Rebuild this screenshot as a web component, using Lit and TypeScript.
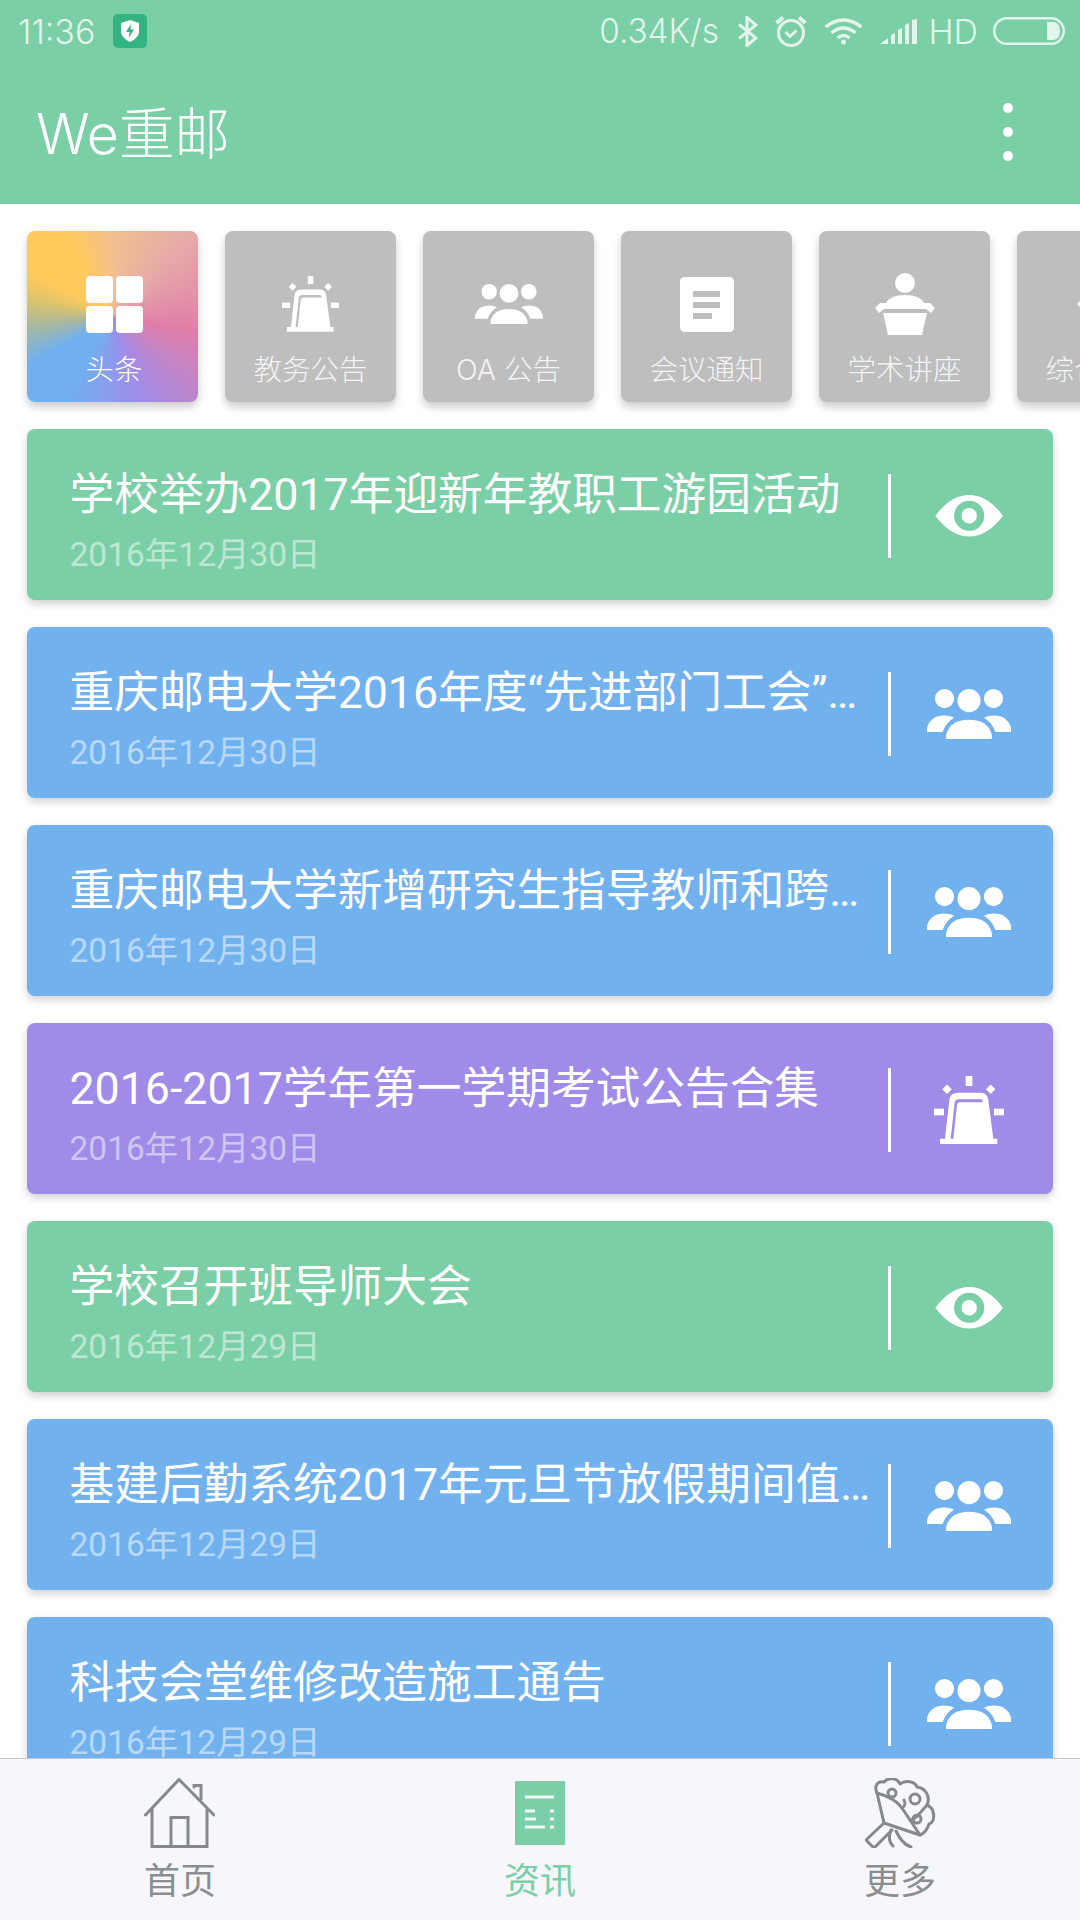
import { LitElement, css, html } from 'lit';
import { customElement } from 'lit/decorators.js';

const GREEN = '#7bcfa6';
const BLUE = '#71b2ee';
const PURPLE = '#a08ce8';

const gridIcon = html`
  <svg width="57" height="57" viewBox="0 0 57 57" fill="#fff">
    <rect width="27" height="27" rx="4" />
    <rect x="30" width="27" height="27" rx="4" />
    <rect y="30" width="27" height="27" rx="4" />
    <rect x="30" y="30" width="27" height="27" rx="4" />
  </svg>
`;

const alarmIcon = (width: number) => html`
  <svg width=${width} viewBox="0 0 210 205" fill="#fff">
    <rect x="95" width="20" height="30" />
    <rect y="98" width="30" height="20" />
    <rect x="180" y="98" width="30" height="20" />
    <rect x="29" y="30" width="20" height="20" transform="rotate(45 39 40)" />
    <rect x="160" y="30" width="20" height="20" transform="rotate(45 170 40)" />
    <path
      fill-rule="evenodd"
      d="M18 205V188H33L46 72Q49 50 72 50H140Q160 50 163 72L178 188H190V205Z
         M50 188H58L69 86Q70 79 77 79H143Q148 79 146 73Q144 70 138 70H74Q64 70 62 80Z"
    />
  </svg>
`;

const peopleIcon = (width: number) => html`
  <svg width=${width} viewBox="0 0 254 153" fill="#fff">
    <circle cx="53" cy="29" r="29" />
    <circle cx="127" cy="35" r="35" />
    <circle cx="201" cy="29" r="29" />
    <path d="M58 153V138Q70 93 127 93T196 138V153Z" />
    <path d="M0 130V118Q10 80 52 80Q70 80 82 87Q58 100 47 130Z" />
    <path d="M254 130V118Q244 80 202 80Q184 80 172 87Q196 100 207 130Z" />
  </svg>
`;

const eyeIcon = html`
  <svg width="69" height="41.5" viewBox="-105 -62 206 124" fill="#fff">
    <path
      fill-rule="evenodd"
      d="M-101 0Q-55 -62 0 -62T101 0Q55 62 0 62T-101 0Z
         M45 0A45 45 0 1 0 -45 0A45 45 0 1 0 45 0Z
         M23 0A23 23 0 1 1 -23 0A23 23 0 1 1 23 0Z"
    />
  </svg>
`;

const docIcon = html`
  <svg width="54" height="55" viewBox="0 0 54 55" fill="#fff">
    <path
      fill-rule="evenodd"
      d="M5 0H49Q54 0 54 5V50Q54 55 49 55H5Q0 55 0 50V5Q0 0 5 0Z
         M13 14V20H40V14Z M13 25V31H40V25Z M13 36V42H32V36Z"
    />
  </svg>
`;

const podiumIcon = html`
  <svg width="60" height="62" viewBox="0 0 60 62" fill="#fff">
    <circle cx="30" cy="10" r="10" />
    <path d="M11 30Q15 22 30 22T49 30Z" />
    <path d="M5 30H55L60 35L56 40L51 36H9L4 40L0 35Z" />
    <path d="M8 40H52L47 62H13Z" />
  </svg>
`;

const diamondIcon = html`
  <svg width="52" height="52" viewBox="0 0 52 52" fill="#fff">
    <path d="M0 26L6 20H46L52 26L46 32H6Z" />
  </svg>
`;

const tiles = [
  { label: '头条', icon: gridIcon, first: true },
  { label: '教务公告', icon: alarmIcon(57) },
  { label: 'OA 公告', icon: peopleIcon(68) },
  { label: '会议通知', icon: docIcon },
  { label: '学术讲座', icon: podiumIcon },
  { label: '综合公告', icon: diamondIcon },
];

const news = [
  { title: '学校举办2017年迎新年教职工游园活动', date: '2016年12月30日', color: GREEN, icon: eyeIcon },
  { title: '重庆邮电大学2016年度“先进部门工会”评选结果公示', date: '2016年12月30日', color: BLUE, icon: peopleIcon(84) },
  { title: '重庆邮电大学新增研究生指导教师和跨学科指导教师', date: '2016年12月30日', color: BLUE, icon: peopleIcon(84) },
  { title: '2016-2017学年第一学期考试公告合集', date: '2016年12月30日', color: PURPLE, icon: alarmIcon(70) },
  { title: '学校召开班导师大会', date: '2016年12月29日', color: GREEN, icon: eyeIcon },
  { title: '基建后勤系统2017年元旦节放假期间值班安排表', date: '2016年12月29日', color: BLUE, icon: peopleIcon(84) },
  { title: '科技会堂维修改造施工通告', date: '2016年12月29日', color: BLUE, icon: peopleIcon(84) },
];

@customElement('app-root')
export class AppRoot extends LitElement {
  static styles = css`
    :host {
      display: flex;
      flex-direction: column;
      width: 1080px;
      height: 1920px;
      overflow: hidden;
      background: #fff;
      font-family: Roboto, 'Noto Sans CJK SC', sans-serif;
    }
    .head {
      flex: none;
      height: 204px;
      background: #7bcfa6;
      display: flex;
      flex-direction: column;
    }
    .status {
      height: 62px;
      display: flex;
      align-items: center;
      padding: 0 15px 0 18px;
      color: #e3f4ec;
      font: 300 34px Inter, 'Noto Sans CJK SC', sans-serif;
    }
    .status svg {
      display: block;
      flex: none;
    }
    .badge {
      width: 34px;
      height: 34px;
      margin-left: 18px;
      border-radius: 5px;
      background: #33b282;
      display: flex;
      align-items: center;
      justify-content: center;
    }
    .status-right {
      margin-left: auto;
      display: flex;
      align-items: center;
    }
    .speed {
      font-size: 33.3px;
    }
    .bt {
      margin-left: 19px;
    }
    .alarm {
      margin-left: 17px;
    }
    .wifi {
      margin-left: 17px;
    }
    .signal {
      margin-left: 17px;
    }
    .hd {
      margin-left: 11.5px;
    }
    .battery {
      margin-left: 15px;
    }
    .toolbar {
      flex: 1;
      display: flex;
      align-items: center;
      justify-content: space-between;
      padding: 0 0 2px 36px;
      color: #fff;
      font: 300 55.5px Inter, 'Noto Sans CJK SC', sans-serif;
    }
    .brand {
      margin-top: -4px;
    }
    .dots {
      display: flex;
      flex-direction: column;
      gap: 14px;
      margin-right: 67px;
    }
    .dots i {
      width: 10px;
      height: 10px;
      border-radius: 50%;
      background: #fff;
    }
    .tiles {
      flex: none;
      display: flex;
      gap: 27px;
      padding: 27px 0 0 27px;
      height: 198px;
      box-sizing: content-box;
      overflow: hidden;
    }
    .tile {
      flex: none;
      width: 171px;
      height: 171px;
      box-sizing: border-box;
      border-radius: 8px;
      background: #bebebe;
      box-shadow: 0 5px 9px rgba(0, 0, 0, 0.2);
      color: rgba(255, 255, 255, 0.85);
      display: flex;
      flex-direction: column;
      align-items: center;
      font: 300 28.5px Inter, 'Noto Sans CJK SC', sans-serif;
    }
    .tile.first {
      color: #fff;
      padding-left: 3px;
      background: conic-gradient(
        #f3c08f 0deg,
        #e6a9a9 45deg,
        #e07ea8 100deg,
        #a08ce8 160deg,
        #70b0f0 212deg,
        #70b0f0 240deg,
        #a8b8a0 263deg,
        #dcc46c 282deg,
        #ffc95c 298deg,
        #ffc95c 330deg,
        #f3c08f 360deg
      );
    }
    .tile-icon {
      height: 64px;
      margin-top: 41px;
      display: flex;
      align-items: center;
      justify-content: center;
    }
    .tile-icon svg {
      display: block;
    }
    .tile-label {
      margin-top: 14px;
      line-height: 40px;
      white-space: nowrap;
    }
    .list {
      flex: 1;
      min-height: 0;
      overflow: hidden;
      display: flex;
      flex-direction: column;
      gap: 27px;
      padding: 0 27px;
    }
    .card {
      flex: none;
      height: 171px;
      border-radius: 8px;
      box-shadow: 0 4px 9px rgba(0, 0, 0, 0.18);
      display: flex;
      color: #fff;
    }
    .text {
      flex: 1;
      min-width: 0;
      padding: 36px 10px 0 42.5px;
    }
    .title {
      font-size: 44.7px;
      line-height: 60px;
      white-space: nowrap;
      overflow: hidden;
      text-overflow: ellipsis;
    }
    .date {
      margin-top: 10px;
      font-size: 33.5px;
      line-height: 40px;
      color: rgba(255, 255, 255, 0.5);
    }
    .side {
      flex: none;
      width: 165px;
      height: 84px;
      margin-top: 45px;
      border-left: 3px solid #fff;
      box-sizing: border-box;
      display: flex;
      align-items: center;
      justify-content: center;
      padding-right: 7px;
    }
    .side svg {
      display: block;
    }
    .nav {
      flex: none;
      height: 162px;
      border-top: 1px solid #c8c8cc;
      box-sizing: border-box;
      background: #f6f6fb;
      display: grid;
      grid-template-columns: 360px 360px 360px;
    }
    .nav-item {
      display: flex;
      flex-direction: column;
      align-items: center;
      color: #8a8e91;
      font-size: 36px;
    }
    .nav-item.active {
      color: #7bcfa6;
    }
    .nav-icon {
      height: 70px;
      margin-top: 19px;
      display: flex;
      align-items: center;
    }
    .nav-icon svg {
      display: block;
    }
    .nav-label {
      margin-top: 10px;
      line-height: 48px;
    }
    .home {
      margin-left: -2px;
    }
  `;

  renderStatus() {
    return html`
      <div class="status">
        <span>11:36</span>
        <span class="badge">
          <svg width="18" height="22" viewBox="0 0 18 22">
            <path fill="#fff" d="M9 0L18 3V13Q16 19 9 22Q2 19 0 13V3Z" />
            <path fill="#33b282" d="M10 4L5 12H8.5L7.5 18L13 9.5H9.5Z" />
          </svg>
        </span>
        <span class="status-right">
          <span class="speed">0.34K/s</span>
          <svg class="bt" width="20" height="31" viewBox="0 0 20 31" fill="none" stroke="#e3f4ec" stroke-width="3">
            <path d="M1 8.5L18 22L9 29.5V1.5L18 9L1 22.5" />
          </svg>
          <svg class="alarm" width="32" height="32" viewBox="0 0 32 32" fill="none" stroke="#e3f4ec" stroke-width="3">
            <circle cx="16" cy="18" r="12.5" />
            <path d="M10.5 17L15 21.5L21.5 15.5" />
            <path stroke-width="4" d="M1.5 8L8 2.5M30.5 8L24 2.5" />
          </svg>
          <svg class="wifi" width="39" height="28" viewBox="0 0 39 28" fill="none" stroke="#e3f4ec" stroke-width="3.5">
            <path d="M1.5 10Q19.5 -4 37.5 10" />
            <path d="M7.5 16Q19.5 6 31.5 16" />
            <path d="M13.5 21Q19.5 16 25.5 21" />
            <circle cx="19.5" cy="25" r="2.5" fill="#e3f4ec" stroke="none" />
          </svg>
          <svg class="signal" width="37" height="25" viewBox="0 0 37 25" fill="#e3f4ec">
            <path d="M0 25L8 19V25ZM11 16L15 14V25H11ZM18 11L22 9V25H18ZM25 6L29 4V25H25ZM32 1L37 0V25H32Z" />
          </svg>
          <span class="hd">HD</span>
          <svg class="battery" width="72" height="28" viewBox="0 0 72 28" fill="none">
            <rect x="1.2" y="1.2" width="69.6" height="25.6" rx="12.8" stroke="#e3f4ec" stroke-width="2.4" />
            <path fill="#e3f4ec" d="M54 5H60Q67 5 67 14T60 23H54Z" />
          </svg>
        </span>
      </div>
    `;
  }

  render() {
    return html`
      <div class="head">
        ${this.renderStatus()}
        <div class="toolbar">
          <span class="brand">We重邮</span>
          <div class="dots"><i></i><i></i><i></i></div>
        </div>
      </div>
      <div class="tiles">
        ${tiles.map(
          (t) => html`
            <div class="tile ${t.first ? 'first' : ''}">
              <div class="tile-icon">${t.icon}</div>
              <div class="tile-label">${t.label}</div>
            </div>
          `
        )}
      </div>
      <div class="list">
        ${news.map(
          (n) => html`
            <div class="card" style="background:${n.color}">
              <div class="text">
                <div class="title">${n.title}</div>
                <div class="date">${n.date}</div>
              </div>
              <div class="side">${n.icon}</div>
            </div>
          `
        )}
      </div>
      <div class="nav">
        <div class="nav-item">
          <div class="nav-icon home">
            <svg width="71" height="70" viewBox="0 0 71 70" fill="none" stroke="#85898c" stroke-width="3" stroke-linecap="round">
              <path d="M1.5 37L35 1.5L70 37" />
              <path d="M8 31V68.5H63V31" />
              <path d="M27 68V39.5H44V68" />
              <path d="M50 9V7.5H57V21" />
            </svg>
          </div>
          <div class="nav-label">首页</div>
        </div>
        <div class="nav-item active">
          <div class="nav-icon">
            <svg width="50" height="64" viewBox="0 0 50 64">
              <rect width="50" height="64" fill="#7bcfa6" />
              <path
                fill="#f2f8f5"
                d="M10 14.5H39V17.5H10ZM10 28.5H20V31.5H10ZM35 28.5H39V31.5H35ZM10 36.5H21V39.5H10ZM35 36.5H39V39.5H35ZM10 44.5H30V47.5H10ZM35 44.5H39V47.5H35Z"
              />
            </svg>
          </div>
          <div class="nav-label">资讯</div>
        </div>
        <div class="nav-item">
          <div class="nav-icon">
            <svg width="71" height="70" viewBox="0 0 71 70" fill="none" stroke="#85898c" stroke-width="3" stroke-linejoin="round" stroke-linecap="round">
              <path d="M12 15L19 45L55 57L37 30Q30 20 12 15Z" />
              <path d="M19 45L1 62L9 70L27 52" />
              <path d="M26 52Q22 62 28 68M31 53Q37 66 46 69" />
              <path d="M12 15C9 8 12 3 19 4C22 0 32 -1 35 6C40 2 50 3 52 9C60 10 66 18 62 27C70 30 71 44 64 46C62 52 58 56 55 57" />
              <path d="M37 30C40 28 41 26 39 22M45 42C50 42 53 37 62 27" />
              <circle cx="50" cy="21" r="5" />
              <circle cx="27" cy="15" r="4" />
              <circle cx="52" cy="41" r="4" />
            </svg>
          </div>
          <div class="nav-label">更多</div>
        </div>
      </div>
    `;
  }
}
